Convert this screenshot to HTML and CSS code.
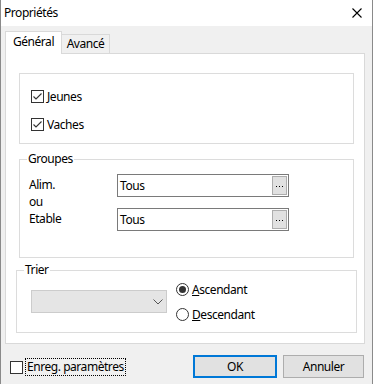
FILE: index.html
```html
<!DOCTYPE html>
<html lang="fr">
<head>
<meta charset="utf-8">
<title>Propriétés</title>
<link rel="stylesheet" href="styles.css">
</head>
<body>
<div class="window">
  <div class="titlebar">
    <span class="title">Propriétés</span>
    <svg class="close" width="10" height="10" viewBox="0 0 10 10"><path d="M0.5 0.5 L9.5 9.5 M9.5 0.5 L0.5 9.5" stroke="#000" stroke-width="1.1" fill="none"/></svg>
  </div>
  <div class="body">
    <div class="tabs">
      <div class="tab active">Général</div>
      <div class="tab">Avancé</div>
    </div>
    <div class="panel">
      <div class="group g1">
        <div class="check">
          <span class="box"><svg width="11" height="11" viewBox="0 0 11 11"><path d="M1.5 5.5 L4 8 L9.5 2.5" stroke="#333" stroke-width="1.1" fill="none"/></svg></span>
          <span>Jeunes</span>
        </div>
        <div class="check">
          <span class="box"><svg width="11" height="11" viewBox="0 0 11 11"><path d="M1.5 5.5 L4 8 L9.5 2.5" stroke="#333" stroke-width="1.1" fill="none"/></svg></span>
          <span>Vaches</span>
        </div>
      </div>
      <div class="group g2">
        <span class="legend">Groupes</span>
        <div class="grid">
          <div class="labels">Alim.<br>ou<br>Etable</div>
          <div class="inputs">
            <div class="input"><span class="val">Tous</span><span class="dots"><svg width="13" height="17" viewBox="0 0 13 17"><rect x="3" y="9" width="1" height="1" fill="#000"/><rect x="6" y="9" width="1" height="1" fill="#000"/><rect x="9" y="9" width="1" height="1" fill="#000"/></svg></span></div>
            <div class="input"><span class="val">Tous</span><span class="dots"><svg width="13" height="17" viewBox="0 0 13 17"><rect x="3" y="9" width="1" height="1" fill="#000"/><rect x="6" y="9" width="1" height="1" fill="#000"/><rect x="9" y="9" width="1" height="1" fill="#000"/></svg></span></div>
          </div>
        </div>
      </div>
      <div class="group g3">
        <span class="legend">Trier</span>
        <div class="sortrow">
          <div class="combo"><svg width="10" height="6" viewBox="0 0 10 6"><path d="M0.5 0.5 L5 5 L9.5 0.5" stroke="#555" stroke-width="1" fill="none"/></svg></div>
          <div class="radios">
            <div class="radio"><span class="circle on"></span><span><u>A</u>scendant</span></div>
            <div class="radio"><span class="circle"></span><span><u>D</u>escendant</span></div>
          </div>
        </div>
      </div>
    </div>
    <div class="footer">
      <div class="save">
        <span class="box empty"></span>
        <span class="focus">Enreg. paramètres</span>
      </div>
      <div class="buttons">
        <div class="btn ok">OK</div>
        <div class="btn">Annuler</div>
      </div>
    </div>
  </div>
</div>
</body>
</html>
```
FILE: styles.css
```css
* { box-sizing: border-box; }
html, body { margin: 0; padding: 0; }
body {
  font-family: "Noto Sans", "DejaVu Sans", sans-serif;
  font-size: 12px;
  letter-spacing: -0.45px;
  color: #000;
  background: #f0f0f0;
}
.window {
  width: 373px;
  height: 384px;
  border-left: 1px solid #8a8a8a;
  border-right: 1px solid #8a8a8a;
  background: #f0f0f0;
  display: flex;
  flex-direction: column;
}
.titlebar {
  height: 26px;
  background: #fff;
  display: flex;
  align-items: center;
  justify-content: space-between;
  flex: none;
}
.title {
  padding-left: 3px;
  line-height: 26px;
}
.close {
  margin-right: 10px;
  display: block;
}
.body {
  flex: 1;
  padding-top: 5px;
  display: flex;
  flex-direction: column;
}
.tabs {
  display: flex;
  align-items: flex-end;
  height: 22px;
  margin-left: 4px;
}
.tab {
  height: 19px;
  width: 49px;
  margin-left: -1px;
  border: 1px solid #d9d9d9;
  border-bottom: none;
  background: #f0f0f0;
  text-align: center;
  line-height: 16px;
  padding-top: 1px;
}
.tab.active {
  position: relative;
  z-index: 1;
  height: 23px;
  width: 57px;
  margin-left: 0;
  margin-bottom: -1px;
  background: #fff;
  padding-top: 2px;
}
.panel {
  margin-left: 4px;
  width: 360px;
  height: 291px;
  border: 1px solid #d9d9d9;
  background: #fff;
  display: flex;
  flex-direction: column;
}
.group {
  position: relative;
  border: 1px solid #dcdcdc;
}
.legend {
  position: absolute;
  top: -9px;
  left: 7px;
  padding: 0 1px;
  background: #fff;
  line-height: 16px;
}
.g1 {
  margin: 19px 0 0 13px;
  width: 335px;
  height: 71px;
  padding: 14px 0 0 11px;
  display: flex;
  flex-direction: column;
  gap: 12px;
}
.check {
  display: flex;
  align-items: center;
  height: 16px;
  gap: 3px;
}
.box {
  width: 13px;
  height: 13px;
  border: 1px solid #333;
  background: #fff;
  display: flex;
  align-items: center;
  justify-content: center;
  flex: none;
}
.box svg { display: block; }
.g2 {
  margin: 15px 0 0 13px;
  width: 335px;
  height: 99px;
  padding: 14px 0 0 9px;
}
.grid {
  display: grid;
  grid-template-columns: 88px 172px;
}
.labels {
  line-height: 17px;
  margin-top: 2px;
}
.inputs {
  display: flex;
  flex-direction: column;
  gap: 11px;
}
.input {
  height: 23px;
  border: 1px solid #7a7a7a;
  background: #fff;
  display: flex;
  align-items: center;
  justify-content: space-between;
  padding-left: 2px;
}
.val { line-height: 19px; }
.dots {
  width: 15px;
  height: 19px;
  margin-right: 1px;
  border: 1px solid #adadad;
  background: #e1e1e1;
  display: flex;
}
.dots svg { display: block; }
.g3 {
  margin: 12px 0 0 10px;
  width: 341px;
  height: 63px;
  padding: 10px 0 0 14px;
}
.sortrow {
  display: flex;
  gap: 9px;
}
.combo {
  width: 136px;
  height: 23px;
  margin-top: 9px;
  border: 1px solid #cccccc;
  background: #e5e5e5;
  display: flex;
  align-items: center;
  justify-content: flex-end;
  padding-right: 3px;
}
.combo svg { display: block; margin-top: 1px; }
.radios {
  display: flex;
  flex-direction: column;
  gap: 9px;
}
.radio {
  display: flex;
  align-items: center;
  height: 16px;
  gap: 3px;
}
.circle {
  width: 13px;
  height: 13px;
  border: 1px solid #333;
  border-radius: 50%;
  background: #fff;
  display: flex;
  align-items: center;
  justify-content: center;
  flex: none;
}
.circle.on::after {
  content: "";
  width: 7px;
  height: 7px;
  border-radius: 50%;
  background: #333;
}
.footer {
  margin-top: 11px;
  height: 23px;
  display: flex;
  justify-content: space-between;
  align-items: center;
}
.save {
  display: flex;
  align-items: center;
  margin-left: 9px;
  margin-top: 1px;
  gap: 2px;
}
.focus {
  border: 1px dotted #000;
  padding: 0 1px 0 1px;
  line-height: 16px;
}
.buttons {
  display: flex;
  gap: 6px;
  margin-right: 8px;
}
.btn {
  height: 23px;
  width: 81px;
  border: 1px solid #adadad;
  background: #e1e1e1;
  display: flex;
  align-items: center;
  justify-content: center;
}
.btn.ok {
  width: 84px;
  border: 2px solid #0078d7;
}
```
